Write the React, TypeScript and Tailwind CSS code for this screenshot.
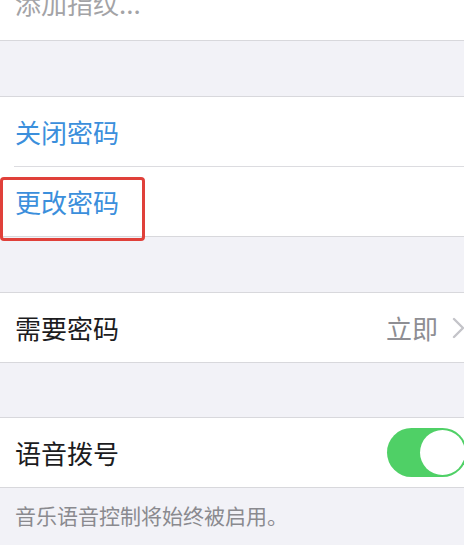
import React from "react";

const font = { fontFamily: '"Noto Sans CJK SC", "Noto Sans", sans-serif' };

export default function App() {
  return (
    <div
      className="w-[464px] h-[545px] overflow-hidden bg-[#f2f2f7]"
      style={font}
    >
      {/* Top partial row */}
      <div className="-mt-[29px] bg-white border-b border-[#d8d8dc]">
        <div className="h-[69px] flex items-center pb-[6px] pl-[15px] text-[26px] text-[#a3a3a6]">
          添加指纹...
        </div>
      </div>

      <div className="h-[55px]" />

      {/* Password section */}
      <div className="bg-white border-y border-[#d8d8dc]">
        <div className="h-[69px] flex items-center pl-[15px] text-[26px] text-[#3b8fdc]">
          关闭密码
        </div>
        <div className="ml-[14px] h-px bg-[#dcdce0]" />
        <div className="relative h-[69px] flex items-center pl-[15px] text-[26px] text-[#3b8fdc]">
          更改密码
          <div className="absolute left-0 top-[10px] w-[145px] h-[64px] border-[3px] border-[#e0403a] rounded-[4px]" />
        </div>
      </div>

      <div className="h-[55px]" />

      {/* Require passcode */}
      <div className="bg-white border-y border-[#d8d8dc]">
        <div className="h-[69px] flex items-center justify-between pl-[15px] text-[26px]">
          <span className="text-[#1c1c1e]">需要密码</span>
          <div className="flex items-center gap-[14px] -mr-[2px]">
            <span className="text-[#8e8e93]">立即</span>
            <svg width="14" height="22" viewBox="0 0 14 22" fill="none">
              <path
                d="M2 2 L11 11 L2 20"
                stroke="#c4c4c9"
                strokeWidth="2.4"
                strokeLinecap="round"
                strokeLinejoin="round"
              />
            </svg>
          </div>
        </div>
      </div>

      <div className="h-[54px]" />

      {/* Voice dial */}
      <div className="bg-white border-y border-[#d8d8dc]">
        <div className="h-[69px] flex items-center justify-between pl-[15px] text-[26px]">
          <span className="text-[#1c1c1e]">语音拨号</span>
          <div className="w-[80px] h-[49px] rounded-full bg-[#4fd066] shrink-0 -mr-[3px] flex items-center justify-end p-[2px]">
            <div className="w-[45px] h-[45px] rounded-full bg-white" />
          </div>
        </div>
      </div>

      <div className="pl-[15px] pt-[12px] text-[21px] text-[#8a8a8f]">
        音乐语音控制将始终被启用。
      </div>
    </div>
  );
}
